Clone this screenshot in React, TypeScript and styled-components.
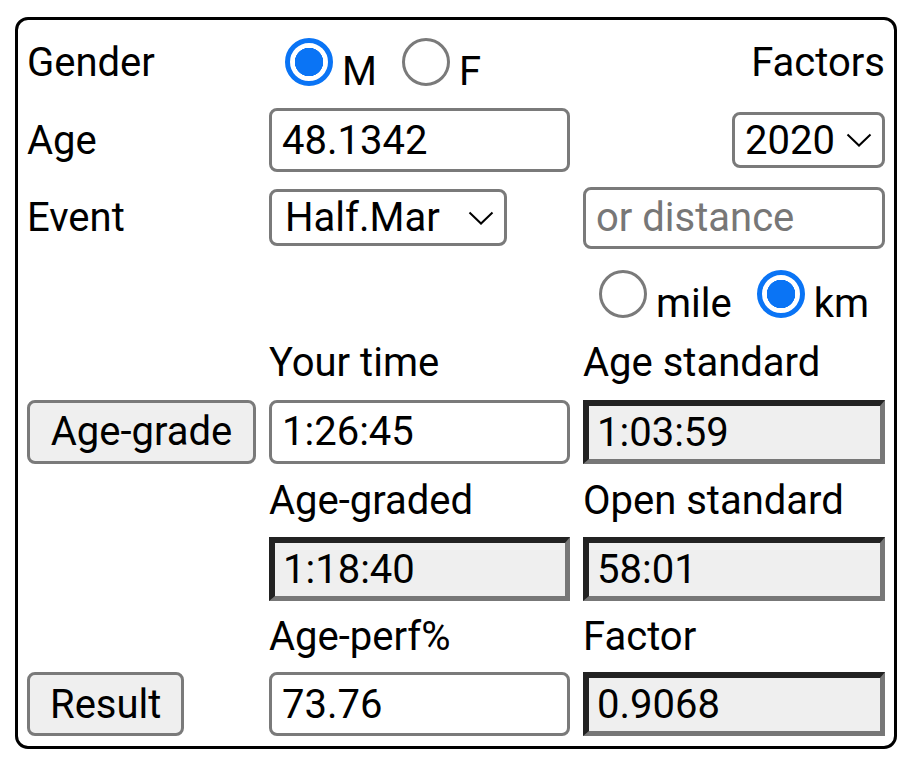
import { useState } from "react";
import styled, { createGlobalStyle } from "styled-components";

const GlobalStyle = createGlobalStyle`
  html, body {
    margin: 0;
    padding: 0;
    background: #fff;
  }
  body {
    font-family: Roboto, "Noto Sans", "Liberation Sans", sans-serif;
    color: #000;
  }
`;

const Panel = styled.form`
  box-sizing: border-box;
  width: 882px;
  margin: 17px 0 0 15px;
  border: 3px solid #000;
  border-radius: 13px;
  padding: 4px 9px 8px 9px;
  display: grid;
  grid-template-columns: 229px 301px 302px;
  grid-template-rows: 77px 78px 77px 72px 69px 69px 68px 69px 67px 68px;
  column-gap: 13px;
  align-items: center;
  font-size: 40px;
`;

const Label = styled.div<{ $col?: number; $right?: boolean }>`
  grid-column: ${(p) => p.$col ?? 1};
  line-height: 47px;
  text-align: ${(p) => (p.$right ? "right" : "left")};
  white-space: nowrap;
`;

const RadioGroup = styled.div<{ $col: number; $center?: boolean }>`
  grid-column: ${(p) => p.$col};
  align-self: start;
  margin-top: 14px;
  display: flex;
  justify-content: ${(p) => (p.$center ? "center" : "flex-start")};
  padding-left: ${(p) => (p.$center ? "0" : "16px")};
`;

const RadioLabel = styled.label<{ $gap: number }>`
  display: flex;
  align-items: flex-start;
  margin-right: ${(p) => p.$gap}px;
  cursor: pointer;
  &:last-child {
    margin-right: 0;
  }
`;

const Radio = styled.input.attrs({ type: "radio" })`
  appearance: none;
  box-sizing: border-box;
  width: 48px;
  height: 48px;
  margin: 0 9px 0 0;
  border-radius: 50%;
  border: 3px solid #7a7a7a;
  background: #fff;
  &:checked {
    border: 5px solid #0a74f5;
    background: radial-gradient(circle, #0a74f5 0 14px, #fff 14.5px);
  }
`;

const RadioText = styled.span`
  margin-top: 14px;
  line-height: 40px;
`;

const Field = styled.input<{ $col: number; $height?: number }>`
  grid-column: ${(p) => p.$col};
  box-sizing: border-box;
  width: 100%;
  height: ${(p) => p.$height ?? 64}px;
  border: 3px solid #7a7a7a;
  border-radius: 8px;
  padding: 0 10px;
  font: inherit;
  font-size: 40px;
  color: #000;
  background: #fff;
  outline: none;
  &::placeholder {
    color: #777;
  }
`;

const Output = styled.output<{ $col: number }>`
  grid-column: ${(p) => p.$col};
  box-sizing: border-box;
  display: flex;
  align-items: center;
  height: 64px;
  padding: 0 8px;
  border-style: solid;
  border-width: 6px 5px 5px 6px;
  border-color: #222 #777 #777 #222;
  background: #efefef;
  color: #000;
`;

const SelectWrap = styled.div<{ $col: number; $width: number; $right?: boolean }>`
  grid-column: ${(p) => p.$col};
  justify-self: ${(p) => (p.$right ? "end" : "start")};
  position: relative;
  width: ${(p) => p.$width}px;
`;

const Select = styled.select<{ $height: number; $pad: number }>`
  appearance: none;
  box-sizing: border-box;
  width: 100%;
  height: ${(p) => p.$height}px;
  border: 3px solid #7a7a7a;
  border-radius: 8px;
  padding: 0 0 0 ${(p) => p.$pad}px;
  font: inherit;
  font-size: 40px;
  color: #000;
  background: #fff;
  outline: none;
`;

const Chevron = styled.svg`
  position: absolute;
  right: 13px;
  top: 50%;
  margin-top: -7px;
  width: 26px;
  height: 14px;
  pointer-events: none;
`;

const Button = styled.button<{ $full?: boolean }>`
  grid-column: 1;
  justify-self: ${(p) => (p.$full ? "stretch" : "start")};
  box-sizing: border-box;
  height: 64px;
  padding: 0 20px;
  border: 3px solid #7a7a7a;
  border-radius: 8px;
  background: #efefef;
  font: inherit;
  font-size: 40px;
  color: #000;
  cursor: pointer;
`;

function ChevronIcon() {
  return (
    <Chevron viewBox="0 0 26 14">
      <path d="M1.5 1.5 L13 12.5 L24.5 1.5" fill="none" stroke="#000" strokeWidth="2" />
    </Chevron>
  );
}

export default function App() {
  const [gender, setGender] = useState("M");
  const [unit, setUnit] = useState("km");
  const [age, setAge] = useState("48.1342");
  const [time, setTime] = useState("1:26:45");
  const [perf, setPerf] = useState("73.76");

  return (
    <>
      <GlobalStyle />
      <Panel onSubmit={(e) => e.preventDefault()}>
        {/* row 1 */}
        <Label>Gender</Label>
        <RadioGroup $col={2}>
          <RadioLabel $gap={25}>
            <Radio name="gender" checked={gender === "M"} onChange={() => setGender("M")} />
            <RadioText>M</RadioText>
          </RadioLabel>
          <RadioLabel $gap={0}>
            <Radio name="gender" checked={gender === "F"} onChange={() => setGender("F")} />
            <RadioText>F</RadioText>
          </RadioLabel>
        </RadioGroup>
        <Label $col={3} $right>Factors</Label>

        {/* row 2 */}
        <Label>Age</Label>
        <Field $col={2} value={age} onChange={(e) => setAge(e.target.value)} />
        <SelectWrap $col={3} $width={153} $right>
          <Select $height={56} $pad={10} defaultValue="2020">
            <option>2020</option>
            <option>2015</option>
            <option>2010</option>
          </Select>
          <ChevronIcon />
        </SelectWrap>

        {/* row 3 */}
        <Label>Event</Label>
        <SelectWrap $col={2} $width={238}>
          <Select $height={57} $pad={13} defaultValue="Half.Mar">
            <option>5K</option>
            <option>10K</option>
            <option>Half.Mar</option>
            <option>Marathon</option>
          </Select>
          <ChevronIcon />
        </SelectWrap>
        <Field $col={3} $height={62} placeholder="or distance" />

        {/* row 4 */}
        <RadioGroup $col={3} $center>
          <RadioLabel $gap={25}>
            <Radio name="unit" checked={unit === "mile"} onChange={() => setUnit("mile")} />
            <RadioText>mile</RadioText>
          </RadioLabel>
          <RadioLabel $gap={0}>
            <Radio name="unit" checked={unit === "km"} onChange={() => setUnit("km")} />
            <RadioText>km</RadioText>
          </RadioLabel>
        </RadioGroup>

        {/* row 5-6 */}
        <Label $col={2}>Your time</Label>
        <Label $col={3}>Age standard</Label>
        <Button type="button" $full>Age-grade</Button>
        <Field $col={2} value={time} onChange={(e) => setTime(e.target.value)} />
        <Output $col={3}>1:03:59</Output>

        {/* row 7-8 */}
        <Label $col={2}>Age-graded</Label>
        <Label $col={3}>Open standard</Label>
        <Output $col={2}>1:18:40</Output>
        <Output $col={3}>58:01</Output>

        {/* row 9-10 */}
        <Label $col={2}>Age-perf%</Label>
        <Label $col={3}>Factor</Label>
        <Button type="button">Result</Button>
        <Field $col={2} value={perf} onChange={(e) => setPerf(e.target.value)} />
        <Output $col={3}>0.9068</Output>
      </Panel>
    </>
  );
}
